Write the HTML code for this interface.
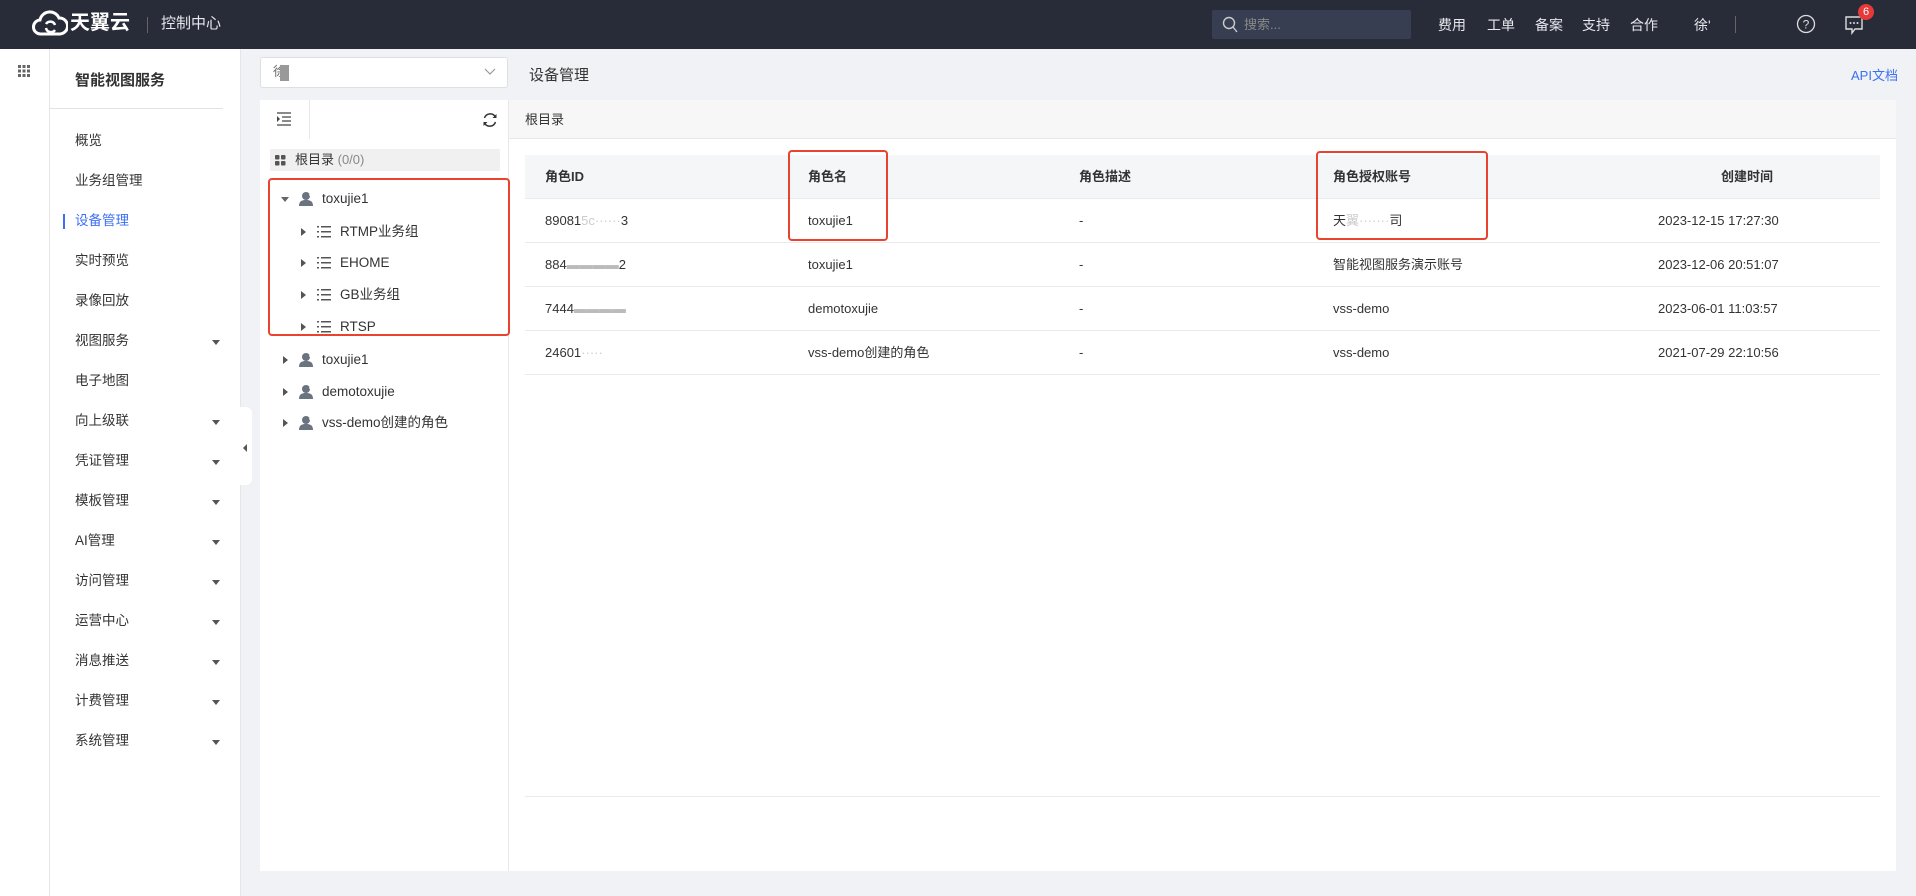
<!DOCTYPE html><html><head><meta charset="utf-8"><style>
*{margin:0;padding:0;box-sizing:border-box}
body{width:1916px;height:896px;overflow:hidden;font-family:"Liberation Sans","Noto Sans CJK SC",sans-serif;background:#f0f2f5;position:relative;color:#333;font-size:14px;line-height:20px}
.a{position:absolute;white-space:nowrap}
.hd{left:0;top:0;width:1916px;height:49px;background:#282c38}
.hd .t{color:#e6e8ee;font-size:14px;top:15px}
.side{left:49px;top:49px;width:192px;height:847px;background:#fff;border-left:1px solid #e6e6e6;border-right:1px solid #e6e6e6}
.ic{left:0;top:49px;width:49px;height:847px;background:#fff}
.mi{left:75px;font-size:13.5px;color:#333}
.car{width:0;height:0;border-left:4px solid transparent;border-right:4px solid transparent;border-top:5px solid #555}
.rt{width:0;height:0;border-top:4px solid transparent;border-bottom:4px solid transparent;border-left:5px solid #555}
.row{left:525px;width:1355px;height:44px;border-bottom:1px solid #e8eaee;font-size:13px}
.row>span{position:absolute;top:12px}
.red{border:2px solid #e8432f;border-radius:4px}
.tr{font-size:13.5px;color:#333}
.b{color:#ccc}
</style></head><body>
<div class="a hd">
<svg class="a" style="left:32px;top:10px" width="36" height="28" viewBox="0 0 36 28"><path d="M9 24 A7 7 0 0 1 8 10 A10 10 0 0 1 27 8 A8 8 0 0 1 28 24 Z" fill="none" stroke="#fff" stroke-width="3"/><path d="M14 18 a5 5 0 0 0 9 2 M23 15 a5 5 0 0 0 -9 -1" fill="none" stroke="#fff" stroke-width="2.5"/></svg>
<div class="a" style="left:70px;top:13px;color:#fff;font-size:20px;font-weight:bold">天翼云</div>
<div class="a" style="left:147px;top:17px;width:1px;height:16px;background:#666"></div>
<div class="a t" style="left:161px;top:14px;font-size:15px">控制中心</div>
<div class="a" style="left:1212px;top:10px;width:199px;height:29px;background:#383e52;border-radius:2px"></div>
<svg class="a" style="left:1222px;top:16px" width="16" height="17"><circle cx="7" cy="7" r="5.5" fill="none" stroke="#ccc" stroke-width="1.4"/><path d="M11 11l4 5" stroke="#ccc" stroke-width="1.4"/></svg>
<div class="a" style="left:1244px;top:15px;color:#888;font-size:13px">搜索...</div>
<div class="a t" style="left:1438px">费用</div><div class="a t" style="left:1487px">工单</div><div class="a t" style="left:1535px">备案</div><div class="a t" style="left:1582px">支持</div><div class="a t" style="left:1630px">合作</div><div class="a t" style="left:1694px">徐'</div>
<div class="a" style="left:1735px;top:16px;width:1px;height:17px;background:#666"></div>
<svg class="a" style="left:1796px;top:14px" width="20" height="20"><circle cx="10" cy="10" r="8.5" fill="none" stroke="#ddd" stroke-width="1.3"/><text x="10" y="14.5" font-size="12" fill="#ddd" text-anchor="middle" font-family="Liberation Sans">?</text></svg>
<svg class="a" style="left:1845px;top:16px" width="18" height="20"><path d="M1 1h16v12h-7l-3 4v-4H1z" fill="none" stroke="#ddd" stroke-width="1.4"/><circle cx="5.5" cy="7" r="1" fill="#ddd"/><circle cx="9" cy="7" r="1" fill="#ddd"/><circle cx="12.5" cy="7" r="1" fill="#ddd"/></svg>
<div class="a" style="left:1858px;top:4px;width:16px;height:16px;border-radius:8px;background:#e5393a;color:#fff;font-size:11px;text-align:center;line-height:16px">6</div>
</div>
<div class="a ic"><svg class="a" style="left:18px;top:16px" width="12" height="12"><g fill="#666"><rect x="0" y="0" width="3" height="3"/><rect x="4.5" y="0" width="3" height="3"/><rect x="9" y="0" width="3" height="3"/><rect x="0" y="4.5" width="3" height="3"/><rect x="4.5" y="4.5" width="3" height="3"/><rect x="9" y="4.5" width="3" height="3"/><rect x="0" y="9" width="3" height="3"/><rect x="4.5" y="9" width="3" height="3"/><rect x="9" y="9" width="3" height="3"/></g></svg></div>
<div class="a side"></div>
<div class="a" style="left:75px;top:71px;font-size:15px;font-weight:bold;color:#333">智能视图服务</div>
<div class="a" style="left:49px;top:108px;width:174px;height:1px;background:#e3e3e3"></div>
<div class="a mi" style="top:131px">概览</div>
<div class="a mi" style="top:171px">业务组管理</div>
<div class="a" style="left:63px;top:214px;width:2px;height:15px;background:#3d6ff5"></div>
<div class="a mi" style="top:211px;color:#3d6ff5">设备管理</div>
<div class="a mi" style="top:251px">实时预览</div>
<div class="a mi" style="top:291px">录像回放</div>
<div class="a mi" style="top:331px">视图服务</div>
<div class="a mi" style="top:371px">电子地图</div>
<div class="a mi" style="top:411px">向上级联</div>
<div class="a mi" style="top:451px">凭证管理</div>
<div class="a mi" style="top:491px">模板管理</div>
<div class="a mi" style="top:531px">AI管理</div>
<div class="a mi" style="top:571px">访问管理</div>
<div class="a mi" style="top:611px">运营中心</div>
<div class="a mi" style="top:651px">消息推送</div>
<div class="a mi" style="top:691px">计费管理</div>
<div class="a mi" style="top:731px">系统管理</div>
<div class="a car" style="left:212px;top:340px"></div><div class="a car" style="left:212px;top:420px"></div><div class="a car" style="left:212px;top:460px"></div><div class="a car" style="left:212px;top:500px"></div><div class="a car" style="left:212px;top:540px"></div><div class="a car" style="left:212px;top:580px"></div><div class="a car" style="left:212px;top:620px"></div><div class="a car" style="left:212px;top:660px"></div><div class="a car" style="left:212px;top:700px"></div><div class="a car" style="left:212px;top:740px"></div>
<div class="a" style="left:240px;top:407px;width:12px;height:78px;background:#fff;border-radius:0 6px 6px 0"></div>
<div class="a" style="left:243px;top:444px;width:0;height:0;border-top:4px solid transparent;border-bottom:4px solid transparent;border-right:4px solid #555"></div>
<div class="a" style="left:260px;top:57px;width:248px;height:31px;background:#fff;border:1px solid #dcdfe6;border-radius:3px"></div>
<div class="a" style="left:273px;top:62px;font-size:13px;color:#666">徐</div><div class="a" style="left:280px;top:65px;width:9px;height:16px;background:#999"></div>
<svg class="a" style="left:484px;top:68px" width="12" height="8"><path d="M1 1l5 5 5-5" fill="none" stroke="#999" stroke-width="1.2"/></svg>
<div class="a" style="left:529px;top:66px;font-size:15px;color:#333">设备管理</div>
<div class="a" style="left:1851px;top:66px;font-size:13px;color:#3d6ff5">API文档</div>
<div class="a" style="left:260px;top:100px;width:1636px;height:771px;background:#fff"></div>
<div class="a" style="left:260px;top:100px;width:1636px;height:39px;background:#f7f7f8;border-bottom:1px solid #e8e8e8"></div>
<div class="a" style="left:260px;top:100px;width:50px;height:39px;background:#fff;border-right:1px solid #e8e8e8"></div>
<div class="a" style="left:310px;top:100px;width:198px;height:39px;background:#fff"></div>
<div class="a" style="left:508px;top:100px;width:1px;height:771px;background:#e8e8e8"></div>
<svg class="a" style="left:276px;top:112px" width="16" height="14"><path d="M1 1h14M6 5h9M6 9h9M1 13h14" stroke="#444" stroke-width="1.3"/><path d="M1 4l3 3-3 3z" fill="#444"/></svg>
<svg class="a" style="left:482px;top:112px" width="16" height="16"><path d="M13.5 5A6 6 0 0 0 2.5 6M2.5 11A6 6 0 0 0 13.5 10" fill="none" stroke="#333" stroke-width="1.5"/><path d="M14.5 2v4h-4z M1.5 14v-4h4z" fill="#333"/></svg>
<div class="a" style="left:525px;top:110px;font-size:13px">根目录</div>
<div class="a" style="left:270px;top:149px;width:230px;height:22px;background:#f0f0f0"></div>
<svg class="a" style="left:275px;top:155px" width="11" height="11"><g fill="#555"><rect width="4.5" height="4.5" rx="1"/><rect x="6" width="4.5" height="4.5" rx="1"/><rect y="6" width="4.5" height="4.5" rx="1"/><rect x="6" y="6" width="4.5" height="4.5" rx="1"/></g></svg>
<div class="a tr" style="left:295px;top:150px;font-size:13px">根目录 <span style="color:#888">(0/0)</span></div>
<div class="a red" style="left:268px;top:178px;width:242px;height:158px"></div>
<div class="a" style="left:281px;top:197px;width:0;height:0;border-left:4px solid transparent;border-right:4px solid transparent;border-top:5px solid #666"></div>
<div class="a rt" style="left:283px;top:356px"></div><div class="a rt" style="left:283px;top:388px"></div><div class="a rt" style="left:283px;top:419px"></div>
<div class="a rt" style="left:301px;top:228px"></div><div class="a rt" style="left:301px;top:259px"></div><div class="a rt" style="left:301px;top:291px"></div><div class="a rt" style="left:301px;top:323px"></div>
<svg width="0" height="0" style="position:absolute"><defs><symbol id="u" viewBox="0 0 16 15"><circle cx="7" cy="5" r="4" fill="#6b7280"/><path d="M0 15c0-5 3-6 7-6s7 1 7 6z" fill="#6b7280"/><path d="M10 4h5" stroke="#fff" stroke-width="1.2"/></symbol><symbol id="l" viewBox="0 0 14 12"><g fill="#555"><rect x="0" y="0" width="2" height="1.5"/><rect x="4" y="0" width="10" height="1.5"/><rect x="0" y="5" width="2" height="1.5"/><rect x="4" y="5" width="10" height="1.5"/><rect x="0" y="10" width="2" height="1.5"/><rect x="4" y="10" width="10" height="1.5"/></g></symbol></defs></svg>
<svg class="a" style="left:299px;top:191px" width="16" height="15"><use href="#u"/></svg>
<svg class="a" style="left:299px;top:352px" width="16" height="15"><use href="#u"/></svg>
<svg class="a" style="left:299px;top:384px" width="16" height="15"><use href="#u"/></svg>
<svg class="a" style="left:299px;top:415px" width="16" height="15"><use href="#u"/></svg>
<svg class="a" style="left:317px;top:226px" width="14" height="12"><use href="#l"/></svg>
<svg class="a" style="left:317px;top:257px" width="14" height="12"><use href="#l"/></svg>
<svg class="a" style="left:317px;top:289px" width="14" height="12"><use href="#l"/></svg>
<svg class="a" style="left:317px;top:321px" width="14" height="12"><use href="#l"/></svg>
<div class="a tr" style="left:322px;top:189px">toxujie1</div>
<div class="a tr" style="left:340px;top:222px">RTMP业务组</div>
<div class="a tr" style="left:340px;top:253px">EHOME</div>
<div class="a tr" style="left:340px;top:285px">GB业务组</div>
<div class="a tr" style="left:340px;top:317px">RTSP</div>
<div class="a tr" style="left:322px;top:350px">toxujie1</div>
<div class="a tr" style="left:322px;top:382px">demotoxujie</div>
<div class="a tr" style="left:322px;top:413px">vss-demo创建的角色</div>
<div class="a row" style="top:155px;background:#f5f6f8;font-weight:bold;color:#333"><span style="left:20px">角色ID</span><span style="left:283px">角色名</span><span style="left:554px">角色描述</span><span style="left:808px">角色授权账号</span><span style="left:1196px">创建时间</span></div>
<div class="a row" style="top:199px"><span style="left:20px">89081<i class="b" style="font-style:normal">5c······</i>3</span><span style="left:283px">toxujie1</span><span style="left:554px">-</span><span style="left:808px">天<i class="b" style="font-style:normal">翼·······</i>司</span><span style="left:1133px">2023-12-15 17:27:30</span></div>
<div class="a row" style="top:243px"><span style="left:20px">884<i class="b" style="font-style:normal;color:#bbb">▬▬▬▬</i>2</span><span style="left:283px">toxujie1</span><span style="left:554px">-</span><span style="left:808px">智能视图服务演示账号</span><span style="left:1133px">2023-12-06 20:51:07</span></div>
<div class="a row" style="top:287px"><span style="left:20px">7444<i class="b" style="font-style:normal;color:#bbb">▬▬▬▬</i></span><span style="left:283px">demotoxujie</span><span style="left:554px">-</span><span style="left:808px">vss-demo</span><span style="left:1133px">2023-06-01 11:03:57</span></div>
<div class="a row" style="top:331px"><span style="left:20px">24601<i class="b" style="font-style:normal">·····</i></span><span style="left:283px">vss-demo创建的角色</span><span style="left:554px">-</span><span style="left:808px">vss-demo</span><span style="left:1133px">2021-07-29 22:10:56</span></div>
<div class="a" style="left:525px;top:796px;width:1355px;height:1px;background:#e8eaee"></div>
<div class="a red" style="left:788px;top:150px;width:100px;height:91px"></div>
<div class="a red" style="left:1316px;top:151px;width:172px;height:89px"></div>
</body></html>
